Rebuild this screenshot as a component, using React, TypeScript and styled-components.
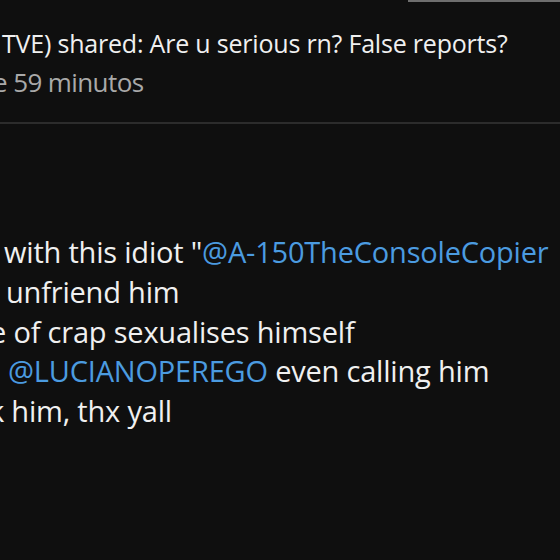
import styled, { createGlobalStyle } from "styled-components";

const GlobalStyle = createGlobalStyle`
  html, body {
    margin: 0;
    padding: 0;
    background: #0f0f0f;
  }
`;

export default function App() {
  return (
    <>
      <GlobalStyle />
      <Screen>
        <TopEdge>
          <EdgeBar />
        </TopEdge>
        <Header>
          <Title $shift={2}>TVE) shared: Are u serious rn? False reports?</Title>
          <Meta $shift={-7}>e 59 minutos</Meta>
        </Header>
        <Divider />
        <Body>
          <Line $shift={4}>
            with this idiot "<Mention>@A-150TheConsoleCopier</Mention>
          </Line>
          <Line $shift={6}>unfriend him</Line>
          <Line $shift={-10}>e of crap sexualises himself</Line>
          <Line $shift={8}>
            <Mention>@LUCIANOPEREGO</Mention> even calling him
          </Line>
          <Line $shift={-11}>k him, thx yall</Line>
        </Body>
      </Screen>
    </>
  );
}

const Screen = styled.div`
  width: 560px;
  height: 560px;
  overflow: hidden;
  background: #0f0f0f;
  display: flex;
  flex-direction: column;
  font-family: "Open Sans", "Noto Sans", sans-serif;
  font-weight: 500;
  color: #ececec;
`;

const TopEdge = styled.div`
  display: flex;
  justify-content: flex-end;
  height: 2px;
`;

const EdgeBar = styled.div`
  width: 152px;
  height: 2px;
  background: #6e6e6e;
`;

const Header = styled.div`
  display: flex;
  flex-direction: column;
  padding: 22px 0 20px;
`;

const Title = styled.div<{ $shift: number }>`
  margin-left: ${p => p.$shift}px;
  font-size: 25px;
  line-height: 39px;
  white-space: nowrap;
  letter-spacing: -0.2px;
  color: #f0f0f0;
`;

const Meta = styled(Title)`
  font-size: 26px;
  letter-spacing: -0.6px;
  color: #a9a9a9;
`;

const Divider = styled.div`
  height: 2px;
  background: #2c2c2c;
`;

const Body = styled.div`
  display: flex;
  flex-direction: column;
  padding-top: 108px;
`;

const Line = styled.div<{ $shift: number }>`
  margin-left: ${p => p.$shift}px;
  font-size: 29px;
  line-height: 39.75px;
  white-space: nowrap;
  letter-spacing: -0.2px;
  color: #f0f0f0;
`;

const Mention = styled.span`
  color: #4b9be0;
`;
